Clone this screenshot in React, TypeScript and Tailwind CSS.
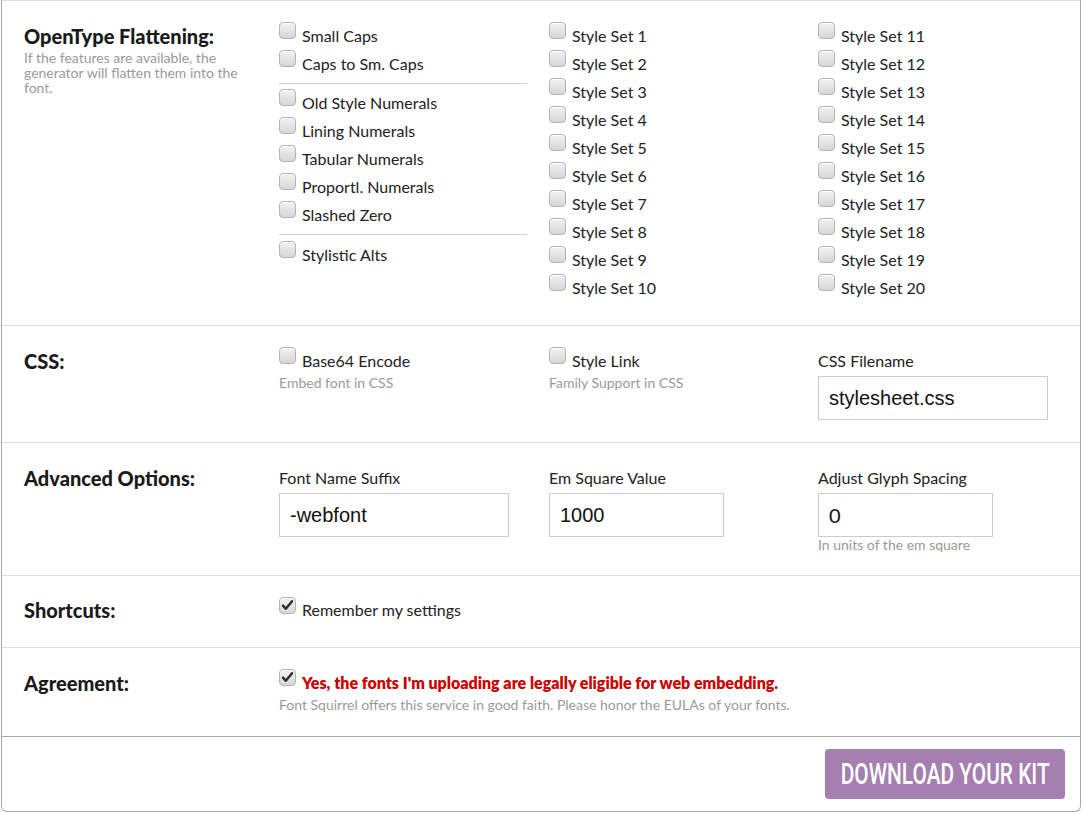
import React from 'react';

const Box = ({ checked = false, className = '' }: { checked?: boolean; className?: string }) => (
  <span className={`flex h-[17px] w-[17px] shrink-0 items-center justify-center rounded-[4px] border border-[#b3b3b3] bg-gradient-to-b from-[#f3f3f3] to-[#d6d6d6] shadow-[inset_0_1px_0_#fff] ${className}`}>
    {checked && (
      <svg viewBox="0 0 16 16" className="h-[13px] w-[13px]">
        <path d="M2.5 8.2l3.4 3.8L13.6 2.8" fill="none" stroke="#2a2a2a" strokeWidth={3} strokeLinecap="round" strokeLinejoin="round" />
      </svg>
    )}
  </span>
);

const Check = ({ label, checked = false, boxClass = '' }: { label: string; checked?: boolean; boxClass?: string }) => (
  <div className="flex h-[28px] items-start">
    <Box checked={checked} className={boxClass} />
    <span className="ml-[6px] text-[16px] leading-[28px] text-[#222]">{label}</span>
  </div>
);

const Label = ({ children }: { children: React.ReactNode }) => (
  <div className="w-[277px] shrink-0 pl-[22px]">
    <h3 className="text-[20px] font-black leading-[28px] text-[#1a1a1a]">{children}</h3>
  </div>
);

const Field = ({ label, value, w, mono = true }: { label: string; value: string; w: string; mono?: boolean }) => (
  <div>
    <div className="text-[16px] leading-[28px] text-[#222]">{label}</div>
    <input
      readOnly
      value={value}
      className={`mt-px block h-[44px] border border-[#ccc] bg-white px-[10px] text-[20px] text-[#111] outline-none ${w} ${mono ? "font-['Liberation_Sans',Arial,sans-serif]" : ''}`}
    />
  </div>
);

const Hint = ({ children }: { children: React.ReactNode }) => (
  <div className="text-[14px] leading-[16px] text-[#9a9a9a]">{children}</div>
);

const Rule = () => <div className="my-[5px] h-px w-[248px] bg-[#cfcfcf]" />;

export default function App() {
  const setsA = Array.from({ length: 10 }, (_, i) => `Style Set ${i + 1}`);
  const setsB = Array.from({ length: 10 }, (_, i) => `Style Set ${i + 11}`);

  return (
    <div className="min-h-[814px] bg-white font-['Lato','Open_Sans',sans-serif]">
      <div className="ml-px w-[1080px] overflow-hidden rounded-b-[6px] border-x border-t border-b border-x-[#a8a8a8] border-t-[#dcdcdc] border-b-[#a8a8a8]">
        {/* OpenType */}
        <section className="flex border-b border-[#dcdcdc] pt-[21px] pb-[23px]">
          <div className="w-[277px] shrink-0 pl-[22px]">
            <h3 className="text-[20px] font-black leading-[28px] text-[#1a1a1a]">OpenType Flattening:</h3>
            <p className="w-[228px] text-[14px] leading-[15px] text-[#9a9a9a]">
              If the features are available, the generator will flatten them into the font.
            </p>
          </div>
          <div className="w-[270px] shrink-0">
            <Check label="Small Caps" />
            <Check label="Caps to Sm. Caps" />
            <Rule />
            <Check label="Old Style Numerals" />
            <Check label="Lining Numerals" />
            <Check label="Tabular Numerals" />
            <Check label="Proportl. Numerals" />
            <Check label="Slashed Zero" />
            <div className="mt-[5px] mb-[6px] h-px w-[248px] bg-[#cfcfcf]" />
            <Check label="Stylistic Alts" />
          </div>
          <div className="w-[269px] shrink-0">
            {setsA.map((s) => (
              <Check key={s} label={s} />
            ))}
          </div>
          <div>
            {setsB.map((s) => (
              <Check key={s} label={s} />
            ))}
          </div>
        </section>

        {/* CSS */}
        <section className="flex border-b border-[#dcdcdc] pt-[21px] pb-[22px]">
          <Label>CSS:</Label>
          <div className="w-[270px] shrink-0">
            <Check label="Base64 Encode" />
            <Hint>Embed font in CSS</Hint>
          </div>
          <div className="w-[269px] shrink-0">
            <Check label="Style Link" />
            <Hint>Family Support in CSS</Hint>
          </div>
          <Field label="CSS Filename" value="stylesheet.css" w="w-[230px]" />
        </section>

        {/* Advanced */}
        <section className="flex border-b border-[#dcdcdc] pt-[21px] pb-[22px]">
          <Label>Advanced Options:</Label>
          <div className="w-[270px] shrink-0">
            <Field label="Font Name Suffix" value="-webfont" w="w-[230px]" />
          </div>
          <div className="w-[269px] shrink-0">
            <Field label="Em Square Value" value="1000" w="w-[175px]" />
          </div>
          <div>
            <Field label="Adjust Glyph Spacing" value="0" w="w-[175px]" mono={false} />
            <Hint>In units of the em square</Hint>
          </div>
        </section>

        {/* Shortcuts */}
        <section className="flex border-b border-[#dcdcdc] pt-[20px] pb-[23px]">
          <Label>Shortcuts:</Label>
          <Check label="Remember my settings" checked boxClass="mt-[1px]" />
        </section>

        {/* Agreement */}
        <section className="flex border-b border-[#a8a8a8] pt-[21px] pb-[23px]">
          <Label>Agreement:</Label>
          <div>
            <div className="flex h-[28px] items-start">
              <Box checked />
              <span className="ml-[6px] text-[16px] font-extrabold leading-[28px] text-[#cc0000]">
                Yes, the fonts I'm uploading are legally eligible for web embedding.
              </span>
            </div>
            <Hint>Font Squirrel offers this service in good faith. Please honor the EULAs of your fonts.</Hint>
          </div>
        </section>

        {/* Footer */}
        <div className="flex justify-end pt-[12px] pr-[15px] pb-[12px]">
          <button className="flex h-[50px] w-[240px] items-center justify-center overflow-hidden rounded-[4px] bg-[#a57fb0] text-white">
            <span className="inline-block scale-x-[0.72] font-['Roboto',sans-serif] text-[29px] font-medium leading-none whitespace-nowrap">
              DOWNLOAD YOUR KIT
            </span>
          </button>
        </div>
      </div>
    </div>
  );
}
